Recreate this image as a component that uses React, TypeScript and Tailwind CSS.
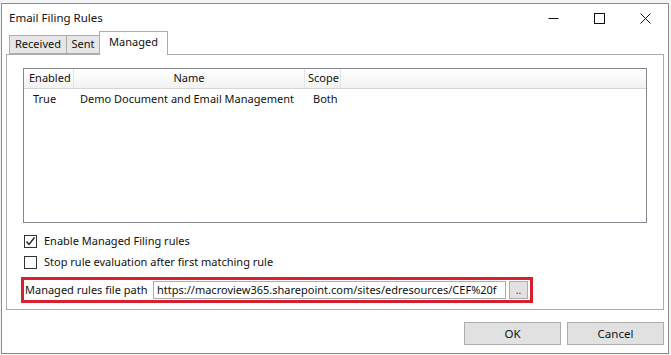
import React from "react";

const font = { fontFamily: '"Noto Sans", "Liberation Sans", sans-serif' };

function TitleButtons() {
  return (
    <div className="flex h-full items-center">
      <div className="flex w-[46px] items-center justify-center">
        <svg width="11" height="11" viewBox="0 0 11 11">
          <path d="M0.5 5.5h10" stroke="#111" strokeWidth="1" fill="none" />
        </svg>
      </div>
      <div className="flex w-[46px] items-center justify-center">
        <svg width="11" height="11" viewBox="0 0 11 11">
          <rect x="0.5" y="0.5" width="10" height="10" stroke="#111" strokeWidth="1" fill="none" />
        </svg>
      </div>
      <div className="flex w-[46px] items-center justify-center">
        <svg width="11" height="11" viewBox="0 0 11 11">
          <path d="M0.5 0.5l10 10M10.5 0.5l-10 10" stroke="#111" strokeWidth="1" fill="none" />
        </svg>
      </div>
    </div>
  );
}

function Checkbox({ checked, label }: { checked: boolean; label: string }) {
  return (
    <div className="flex h-[21px] items-center">
      <div className="flex h-[13px] w-[13px] items-center justify-center border border-[#333] bg-white">
        {checked && (
          <svg width="11" height="11" viewBox="0 0 11 11">
            <path d="M1.5 5.5l2.5 3 5.5-7" stroke="#222" strokeWidth="1.4" fill="none" />
          </svg>
        )}
      </div>
      <span className="ml-[7px] whitespace-nowrap text-[11px] text-[#111]">{label}</span>
    </div>
  );
}

export default function App() {
  return (
    <div className="h-[355px] w-[671px] overflow-hidden bg-[#f3f3f3] pl-px pt-[3px]" style={font}>
      <div className="flex h-[351px] w-[668px] flex-col border border-[#8c8c8c] bg-white">
        {/* title bar */}
        <div className="flex h-[28px] items-center justify-between">
          <span className="pl-[7px] text-[11.5px] text-[#111]">Email Filing Rules</span>
          <TitleButtons />
        </div>

        {/* tabs */}
        <div className="flex h-[22px] items-end pl-[7px] text-[11px] text-[#111]">
          <div className="flex h-[19px] w-[58px] items-center justify-center border border-[#acacac] bg-[#e6e6e6]">
            Received
          </div>
          <div className="-ml-px flex h-[19px] w-[34px] items-center justify-center border border-[#acacac] bg-[#e6e6e6]">
            Sent
          </div>
          <div className="relative z-10 -mb-px -ml-px flex h-[24px] w-[69px] items-center justify-center border border-b-0 border-[#acacac] bg-white pb-[2px]">
            Managed
          </div>
        </div>

        {/* tab panel */}
        <div className="mx-[4px] flex h-[256px] flex-col border border-[#acacac] px-[16px] pt-[13px]">
          <div className="flex h-[155px] flex-col border border-[#828790] bg-white text-[11px] text-[#111]">
            <div className="flex h-[20px] items-stretch whitespace-nowrap border-b border-[#d5d5d5] bg-gradient-to-b from-white to-[#f2f2f2]">
              <div className="flex w-[50px] items-center border-r border-[#e5e5e5] pl-[5px]">Enabled</div>
              <div className="flex w-[231px] items-center justify-center border-r border-[#e5e5e5]">Name</div>
              <div className="flex w-[36px] items-center border-r border-[#e5e5e5] pl-[3px]">Scope</div>
              <div className="flex-1" />
            </div>
            <div className="flex h-[21px] items-center whitespace-nowrap">
              <div className="w-[50px] pl-[9px]">True</div>
              <div className="w-[231px] pl-[6px]">Demo Document and Email Management</div>
              <div className="w-[36px] pl-[8px]">Both</div>
            </div>
          </div>

          <div className="mt-[8px] flex flex-col pl-px">
            <Checkbox checked label="Enable Managed Filing rules" />
            <Checkbox checked={false} label="Stop rule evaluation after first matching rule" />
          </div>

          <div className="-ml-[2px] mt-[4px] flex h-[26px] w-[512px] items-center border-[3px] border-[#d71f2e] pl-[1px] text-[11px] text-[#111]">
            <span className="w-[128px] whitespace-nowrap">Managed rules file path</span>
            <div className="flex h-[18px] w-[353px] items-center overflow-hidden whitespace-nowrap border border-[#abadb3] bg-white pl-[3px]">
              https://macroview365.sharepoint.com/sites/edresources/CEF%20f
            </div>
            <div className="ml-[3px] flex h-[18px] w-[19px] items-end justify-center border border-[#adadad] bg-[#e1e1e1] pb-[3px] text-[10px] leading-none text-[#333]">
              ..
            </div>
          </div>
        </div>

        {/* footer */}
        <div className="flex flex-1 items-start justify-end gap-[6px] pr-[4px] pt-[12px]">
          <button className="h-[23px] w-[97px] border border-[#adadad] bg-[#e1e1e1] text-[11.5px] text-[#111]">
            OK
          </button>
          <button className="h-[23px] w-[97px] border border-[#adadad] bg-[#e1e1e1] text-[11.5px] text-[#111]">
            Cancel
          </button>
        </div>
      </div>
    </div>
  );
}
